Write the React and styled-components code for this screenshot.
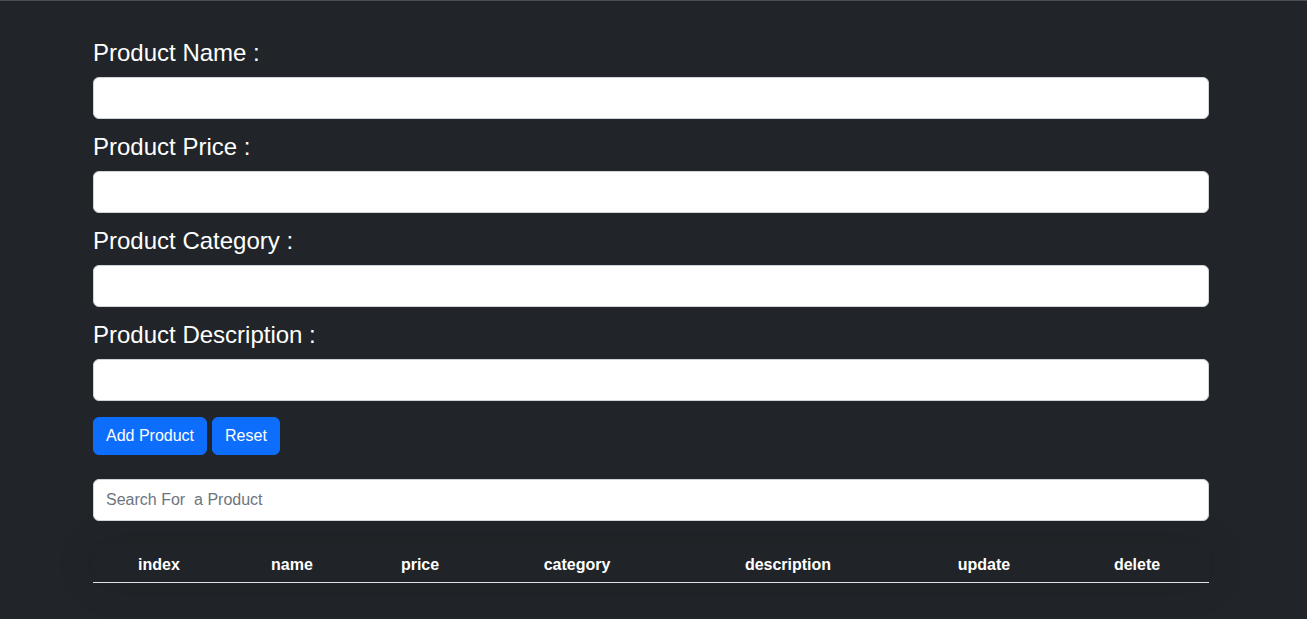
import React, { useState } from 'react';
import styled, { createGlobalStyle } from 'styled-components';

const GlobalStyle = createGlobalStyle`
  * { box-sizing: border-box; }
  body {
    margin: 0;
    background: #212529;
    color: #ffffff;
    font-family: "Liberation Sans", Arial, sans-serif;
    border-top: 1px solid #4a4d51;
  }
`
const Page = styled.div`
  min-height: 618px;
  padding: 37px 0 40px 93px;
`
const Container = styled.div`
  width: 1116px;
`
const FieldGroup = styled.div`
  display: flex;
  flex-direction: column;
  margin-bottom: 13px;
`
const Label = styled.label`
  font-size: 24px;
  line-height: 29px;
  margin-bottom: 10px;
  color: #ffffff;
`
const TextInput = styled.input`
  width: 100%;
  height: 42px;
  padding: 6px 12px;
  background: #ffffff;
  border: 1px solid #ced4da;
  border-radius: 6px;
  font-family: inherit;
  font-size: 16px;
  color: #212529;
  outline: none;
  &::placeholder {
    color: #6c757d;
  }
`
const ButtonRow = styled.div`
  display: flex;
  gap: 5px;
  margin-top: 16px;
  margin-bottom: 24px;
`
const Button = styled.button`
  height: 38px;
  padding: 0 12px;
  background: #0d6efd;
  color: #ffffff;
  border: 1px solid #0d6efd;
  border-radius: 6px;
  font-family: inherit;
  font-size: 16px;
  cursor: pointer;
`
const Table = styled.table`
  width: 1116px;
  margin-top: 24px;
  border-collapse: collapse;
  table-layout: fixed;
  background: #202327;
  box-shadow: 0 0 40px rgba(0, 0, 0, 0.12);
`
const Th = styled.th`
  width: ${(p) => p.$w}px;
  height: 37px;
  padding: 4px 0 0;
  text-align: center;
  font-size: 16px;
  font-weight: 700;
  color: #ffffff;
  border-bottom: 1px solid #dee2e6;
`

const fields = ['Product Name', 'Product Price', 'Product Category', 'Product Description'];
const columns = [
  ['index', 132],
  ['name', 134],
  ['price', 122],
  ['category', 192],
  ['description', 230],
  ['update', 162],
  ['delete', 144],
];

export default function App() {
  const [values, setValues] = useState({});
  const [search, setSearch] = useState('');

  const onChange = (e) => {
    const { name, value } = e.target;
    setValues({ ...values, [name]: value });
  };

  return (
    <>
      <GlobalStyle />
      <Page>
        <Container>
          {fields.map((f) => (
            <FieldGroup key={f}>
              <Label htmlFor={f}>{f} :</Label>
              <TextInput id={f} name={f} value={values[f] || ''} onChange={onChange} />
            </FieldGroup>
          ))}
          <ButtonRow>
            <Button>Add Product</Button>
            <Button onClick={() => setValues({})}>Reset</Button>
          </ButtonRow>
          <TextInput
            placeholder="Search For  a Product"
            value={search}
            onChange={(e) => setSearch(e.target.value)}
          />
          <Table>
            <thead>
              <tr>
                {columns.map(([c, w]) => (
                  <Th key={c} $w={w}>{c}</Th>
                ))}
              </tr>
            </thead>
            <tbody></tbody>
          </Table>
        </Container>
      </Page>
    </>
  );
}
